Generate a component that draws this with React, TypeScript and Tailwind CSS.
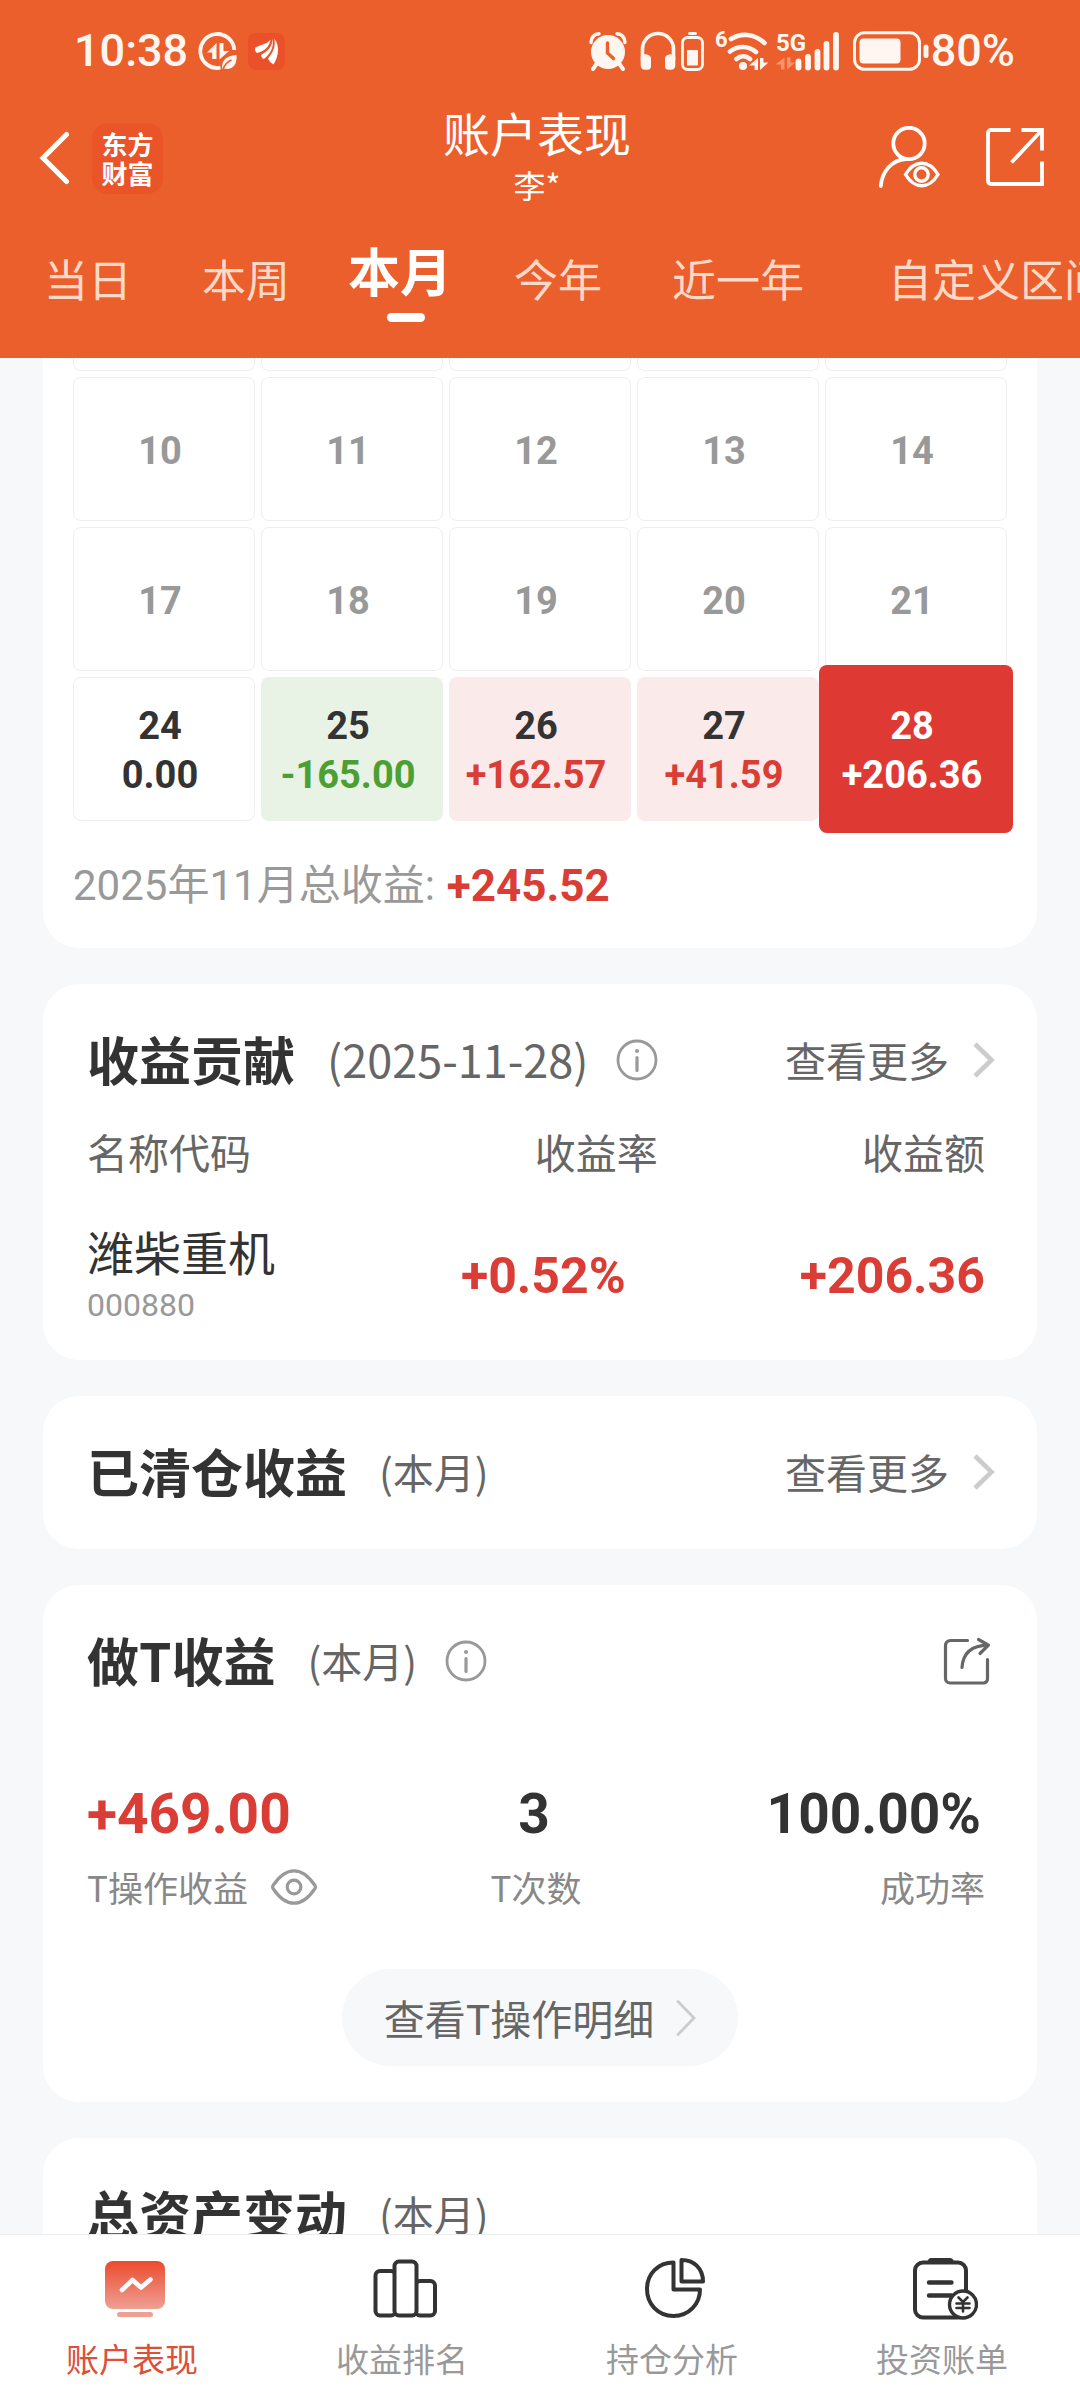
import type { ReactNode } from 'react'
import clsx from 'clsx'

const NUM = "font-['Roboto','Noto_Sans_CJK_SC',sans-serif]"

const periods = ['当日', '本周', '本月', '今年', '近一年', '自定义区间']

type Day = { day: number; amount?: string }

const days: Day[] = [
  { day: 10 }, { day: 11 }, { day: 12 }, { day: 13 }, { day: 14 },
  { day: 17 }, { day: 18 }, { day: 19 }, { day: 20 }, { day: 21 },
  { day: 24, amount: '0.00' },
  { day: 25, amount: '-165.00' },
  { day: 26, amount: '+162.57' },
  { day: 27, amount: '+41.59' },
  { day: 28, amount: '+206.36' },
]

const SELECTED = 28

/* ── Status bar ── */

function StatusBar() {
  return (
    <div className="flex items-center justify-between pt-5 pl-[74px] pr-[65px] text-[#fff6f1]">
      <div className="flex items-center">
        <span className={clsx(NUM, 'text-[45px] leading-[62px] font-medium')}>10:38</span>
        <svg className="ml-2.5" width="40" height="40" viewBox="0 0 40 40" fill="none" aria-hidden="true">
          <path d="M22.500 36.700A17 17 0 1 1 36.300 19" stroke="currentColor" strokeWidth="3.800" />
          <path d="M18.500 12v16h-4.300V21.500H9zM21.500 12h4v8h5.500L21.500 28.500z" fill="currentColor" />
          <path d="M24 38c-.5-8.500 4-13.500 14.500-14C39.500 34 34 39.500 26 37.500z" fill="currentColor" />
          <path d="M25 38c2-5 5-7.500 8.500-9" stroke="#eb5f2c" strokeWidth="1.600" />
        </svg>
        <span className="ml-2.5 flex size-[37px] items-center justify-center rounded-lg bg-[#ea5128]">
          <svg width="25" height="27" viewBox="0 0 25 27" fill="#fff" aria-hidden="true">
            <path d="M16.500 1.500C13.500 6 7.500 6.500 1.300 9.500c-.8 2.500 0 4.500 1.700 5.500C10 13.500 15.500 9 16.500 1.500z" />
            <path d="M18.300 .8C18.500 9 13.500 13 7 17c.3 2 1.200 3.500 2.800 4.100C16 16.500 20.500 9 18.300.8z" />
            <path d="M20.300 .8c1.700 9-2 14.500-6.300 19.700 1 2.500 3 4.700 5.500 6C24 20 26.500 8 20.300.8z" />
          </svg>
        </span>
      </div>

      <div className="flex items-center">
        <svg width="38" height="40" viewBox="0 0 38 40" fill="none" aria-hidden="true">
          <circle cx="19" cy="21" r="17" fill="currentColor" />
          <path d="M2 11.500C2.500 6 5.500 3 10 2.800M36 11.500C35.500 6 32.500 3 28 2.800" stroke="currentColor" strokeWidth="3.400" strokeLinecap="round" />
          <path d="M7.500 33L4 38M30.500 33L34 38" stroke="currentColor" strokeWidth="4" strokeLinecap="round" />
          <path d="M18.500 12V22l6 5.500" stroke="#eb5f2c" strokeWidth="3.400" strokeLinecap="round" />
        </svg>
        <svg className="ml-3" width="38" height="40" viewBox="0 0 38 40" fill="none" aria-hidden="true">
          <path d="M3.500 30V18a15.500 15.500 0 0 1 31 0v12" stroke="currentColor" strokeWidth="3.600" />
          <path d="M1.700 25.500c2.300-3 6-3 9.300-.5.700.5 1 1.200 1 2v8.500c0 2-1.500 3.300-3.500 3.300H6c-2.700 0-4.300-1.800-4.300-4.300zM36.300 25.500c-2.300-3-6-3-9.300-.5-.7.500-1 1.200-1 2v8.500c0 2 1.500 3.300 3.500 3.300H32c2.700 0 4.300-1.800 4.300-4.300z" fill="currentColor" />
        </svg>
        <svg className="ml-1" width="23" height="40" viewBox="0 0 23 40" fill="none" aria-hidden="true">
          <rect x="7" y="1" width="9" height="3" rx="1.500" fill="currentColor" />
          <rect x="1.500" y="6.500" width="20" height="32" rx="5" stroke="currentColor" strokeWidth="2.800" />
          <rect x="6" y="19" width="11" height="15.500" rx="1" fill="currentColor" />
        </svg>
        <svg className="ml-3 overflow-visible" width="52" height="40" viewBox="0 0 52 40" fill="none" aria-hidden="true">
          <text x="-1" y="16" fontFamily="Roboto" fontSize="22" fontWeight="700" fill="currentColor">6</text>
          <path d="M15 8C25 1.500 38 2.500 48.500 12M14 20.500c8-6 18-6 26 .5M20.500 28c4-3.500 9.500-3.500 13.500 0" stroke="currentColor" strokeWidth="4.600" strokeLinecap="round" />
          <circle cx="27" cy="35" r="4" fill="currentColor" />
          <path d="M42 27v12h-3.400v-4.500H33zM44 27h3.400v4.500h5L44 39z" fill="currentColor" />
        </svg>
        <svg className="ml-2 overflow-visible" width="63" height="40" viewBox="0 0 63 40" fill="none" aria-hidden="true">
          <text x="0" y="20" fontFamily="Roboto" fontSize="24" fontWeight="700" fill="currentColor">5G</text>
          <path d="M8.500 26.500v12H5v-5H-.5zM11 26.500h3.500v5H19.500L11 38.500z" fill="#f7936c" />
          <path d="M22.500 30.500v6M32 26v10.500M41.500 21v15.500M50.500 13v23.500M60 4v32.500" stroke="currentColor" strokeWidth="5.800" strokeLinecap="round" />
        </svg>
        <svg className="ml-3.5" width="76" height="40" viewBox="0 0 76 40" fill="none" aria-hidden="true">
          <rect x="1.500" y="1.800" width="65" height="36.500" rx="10" stroke="currentColor" strokeWidth="3" />
          <rect x="6.500" y="7.500" width="41" height="25" rx="4" fill="currentColor" />
          <rect x="70.500" y="13.500" width="5" height="13.500" rx="2.500" fill="currentColor" />
        </svg>
        <span className={clsx(NUM, 'ml-0.5 text-[45px] leading-[62px] font-medium')}>80%</span>
      </div>
    </div>
  )
}

/* ── Orange header: title row + period tabs ── */

function Header() {
  return (
    <header className="shrink-0 bg-[#eb5f2c] text-white">
      <StatusBar />

      <div className="mt-5 grid grid-cols-[1fr_auto_1fr] items-center pl-[38px] pr-9">
        <div className="flex items-center gap-[22px]">
          <button type="button" aria-label="返回">
            <svg width="32" height="54" viewBox="0 0 32 54" fill="none">
              <path d="M28.500 3.500L5 27l23.500 23.500" stroke="currentColor" strokeWidth="5" strokeLinecap="round" />
            </svg>
          </button>
          <div className="flex size-[71px] items-center justify-center rounded-2xl bg-[#ea5429] text-center text-[26px] leading-[29px] font-bold">
            东方<br />财富
          </div>
        </div>

        <div className="pr-2 pb-2 text-center">
          <h1 className="text-[47px] leading-[60px]">账户表现</h1>
          <p className="text-[32px] leading-[44px]">李*</p>
        </div>

        <div className="flex items-center justify-end gap-[46px]">
          <button type="button" aria-label="账户查看">
            <svg width="62" height="64" viewBox="0 0 62 64" fill="none" stroke="currentColor">
              <circle cx="31" cy="17.500" r="15.700" strokeWidth="3.800" />
              <path d="M2.800 60C4 45 14 34 28 33" strokeWidth="3.800" strokeLinecap="round" />
              <path d="M27.500 48.500c9-15 23.500-15 32.500 0-9 15-23.500 15-32.500 0z" strokeWidth="3.400" />
              <circle cx="43.500" cy="48.500" r="6.700" strokeWidth="3.400" />
            </svg>
          </button>
          <button type="button" aria-label="分享">
            <svg width="58" height="60" viewBox="0 0 58 60" fill="none" stroke="currentColor" strokeWidth="3.800">
              <path d="M24.500 2H5a3 3 0 0 0-3 3v48a3 3 0 0 0 3 3h51V33.500" />
              <path d="M35.500 2H56v20.500M55 3L25.500 34.500" />
            </svg>
          </button>
        </div>
      </div>

      <nav className="flex items-start gap-[70px] overflow-hidden pb-9 pl-11 whitespace-nowrap">
        {periods.map((p) =>
          p === '本月' ? (
            <button key={p} type="button" className="-ml-3 -mr-5 shrink-0 pt-6">
              <span className="block pr-3 text-[52px] leading-[64px] font-bold">{p}</span>
              <span className="mx-auto mt-[11px] block h-[9px] w-[38px] rounded-full bg-white" />
            </button>
          ) : (
            <button
              key={p}
              type="button"
              className="shrink-0 pt-8 text-[44px] leading-[64px] text-[#ffd9c8] last:pl-3.5"
            >
              {p}
            </button>
          ),
        )}
      </nav>
    </header>
  )
}

/* ── Shared pieces ── */

function Card({ className, children }: { className?: string; children: ReactNode }) {
  return <section className={clsx('rounded-[36px] bg-white px-11', className)}>{children}</section>
}

function CardTitle({ title, sub, wide, info, children }: {
  title: string
  sub: string
  wide?: boolean
  info?: boolean
  children?: ReactNode
}) {
  return (
    <div className="flex items-center pt-[43px] leading-[64px]">
      <h2 className="pb-0.5 text-[52px] font-bold text-[#333]">{title}</h2>
      <span className={clsx('ml-8 pb-0.5 text-[#666]', wide ? 'text-[45px]' : 'text-[41px]')}>{sub}</span>
      {info && (
        <button type="button" aria-label="说明" className="ml-7">
          <svg width="42" height="42" viewBox="0 0 42 42" fill="none">
            <circle cx="21" cy="21" r="19" stroke="#999" strokeWidth="2.800" />
            <circle cx="21" cy="12" r="2" fill="#999" />
            <path d="M21 18.500v13" stroke="#999" strokeWidth="3.200" strokeLinecap="round" />
          </svg>
        </button>
      )}
      <div className="-mr-0.5 ml-auto flex">{children}</div>
    </div>
  )
}

function MoreLink() {
  return (
    <a href="#more" className="flex items-center gap-6 text-[41px] text-[#666]">
      <span className="pb-0.5">查看更多</span>
      <svg width="22" height="36" viewBox="0 0 22 36" fill="none" aria-hidden="true">
        <path d="M2 2l16.500 16L2 34" stroke="#ccc" strokeWidth="4.600" />
      </svg>
    </a>
  )
}

/* ── Calendar ── */

function DayCell({ day, amount }: Day) {
  const selected = day === SELECTED
  const gain = amount?.startsWith('+')
  const loss = amount?.startsWith('-')

  return (
    <button
      type="button"
      className={clsx(
        'relative flex h-36 flex-col items-center justify-center rounded-lg pt-1 pr-2 text-[38px] leading-[49px] font-bold',
        !gain && !loss && 'border border-[#eee]',
        gain && !selected && 'bg-[#fbeaea]',
        loss && 'bg-[#e8f3e6]',
      )}
    >
      {selected && <span className="absolute -inset-x-1.5 -inset-y-3 rounded-lg bg-[#de3a33]" />}
      <span className={clsx('relative', selected ? 'text-white' : amount ? 'text-[#333]' : 'text-[#999]')}>
        {day}
      </span>
      {amount && (
        <span
          className={clsx(
            'relative',
            selected ? 'text-white' : gain ? 'text-[#d93d35]' : loss ? 'text-[#4b9f33]' : 'text-[#333]',
          )}
        >
          {amount}
        </span>
      )}
    </button>
  )
}

function CalendarCard() {
  return (
    <section className="rounded-b-[36px] bg-white px-[30px] pb-8">
      <div className={clsx(NUM, 'grid grid-cols-5 gap-1.5')}>
        {/* tail of the week that is scrolled under the header */}
        {[3, 4, 5, 6, 7].map((d) => (
          <div key={d} className="h-[13px] rounded-b-lg border border-t-0 border-[#eee]" />
        ))}
        {days.map((d) => (
          <DayCell key={d.day} {...d} />
        ))}
      </div>
      <p className="mt-[35px] flex items-center gap-3 text-[42px] leading-[60px] text-[#999]">
        <span className={NUM}>2025年11月总收益:</span>
        <strong className={clsx(NUM, 'text-[44px] font-bold text-[#d93d35]')}>+245.52</strong>
      </p>
    </section>
  )
}

/* ── Contribution table ── */

function ContributionCard() {
  return (
    <Card className="pb-[33px]">
      <CardTitle title="收益贡献" sub="(2025-11-28)" wide info>
        <MoreLink />
      </CardTitle>
      <div className="mt-7 pr-2">
        <table className="w-full table-fixed">
          <thead>
            <tr className="text-[41px] leading-[60px] text-[#666]">
              <th className="w-[30%] text-left font-normal">名称代码</th>
              <th className="w-[34%] pr-1 text-right font-normal">收益率</th>
              <th className="text-right font-normal">收益额</th>
            </tr>
          </thead>
          <tbody>
            <tr>
              <td className="pt-10">
                <div className="text-[47px] leading-[60px] text-[#333]">潍柴重机</div>
                <div className={clsx(NUM, 'pt-0.5 text-[32px] leading-[44px] text-[#999]')}>000880</div>
              </td>
              <td className={clsx(NUM, 'pt-11 pr-9 text-right text-[50px] font-bold text-[#d93d35]')}>+0.52%</td>
              <td className={clsx(NUM, 'pt-11 text-right text-[50px] font-bold text-[#d93d35]')}>+206.36</td>
            </tr>
          </tbody>
        </table>
      </div>
    </Card>
  )
}

/* ── T trading ── */

function TradingCard() {
  return (
    <Card className="pb-9">
      <CardTitle title="做T收益" sub="(本月)" info>
        <button type="button" aria-label="分享" className="mr-1">
          <svg width="48" height="48" viewBox="0 0 48 48" fill="none" stroke="#666" strokeWidth="3.200" strokeLinecap="round" strokeLinejoin="round">
            <path d="M24.500 3.500H7.500a5 5 0 0 0-5 5v33a4.500 4.500 0 0 0 4.500 4.500h33.500a4 4 0 0 0 4-4V22.500" />
            <path d="M19 30.500C20 16 28 8.500 45 8.200M35.500 2.500L45.500 8.200 37 16.500" />
          </svg>
        </button>
      </CardTitle>
      <dl className="mt-[87px] grid grid-cols-3 pr-2 text-[#333]">
        <div className="flex flex-col-reverse gap-3.5">
          <dt className="flex items-center gap-[22px] text-[35px] leading-[52px] text-[#888]">
            T操作收益
            <button type="button" aria-label="显示或隐藏">
              <svg width="48" height="38" viewBox="0 0 48 38" fill="none" stroke="#999" strokeWidth="3.200">
                <path d="M3 17.500C10 7 16.500 2.800 24 2.800S38 7 45 17.500q1 1.500 0 3C38 31 31.500 35.200 24 35.200S10 31 3 20.500q-1-1.500 0-3z" />
                <circle cx="24" cy="19" r="6.800" />
              </svg>
            </button>
          </dt>
          <dd className={clsx(NUM, 'text-[55px] leading-[66px] font-bold text-[#d93d35]')}>+469.00</dd>
        </div>
        <div className="flex flex-col-reverse gap-3.5 text-center">
          <dt className="text-[35px] leading-[52px] text-[#888]">T次数</dt>
          <dd className={clsx(NUM, 'pr-1 text-[55px] leading-[66px] font-bold')}>3</dd>
        </div>
        <div className="flex flex-col-reverse gap-3.5 text-right">
          <dt className="text-[35px] leading-[52px] text-[#888]">成功率</dt>
          <dd className={clsx(NUM, 'pr-1 text-[55px] leading-[66px] font-bold')}>100.00%</dd>
        </div>
      </dl>
      <button
        type="button"
        className="mx-auto mt-14 flex items-center gap-[22px] rounded-full bg-[#f7f8fa] px-[42px] py-[18px] text-[41px] leading-[61px] text-[#666]"
      >
        查看T操作明细
        <svg width="20" height="36" viewBox="0 0 20 36" fill="none" aria-hidden="true">
          <path d="M2 1.500L18 18 2 34.500" stroke="#ccc" strokeWidth="2.800" strokeLinecap="round" />
        </svg>
      </button>
    </Card>
  )
}

/* ── Bottom tab bar ── */

const tabs = [
  {
    label: '账户表现',
    icon: (
      <>
        <defs>
          <linearGradient id="tabGradient" x1="0" y1="0" x2="0" y2="1">
            <stop offset="0" stopColor="#ec4a2d" />
            <stop offset="1" stopColor="#eea094" />
          </linearGradient>
        </defs>
        <rect x="3" y="5" width="60" height="48" rx="8" fill="url(#tabGradient)" />
        <path d="M20 34l10.500-10 8.500 7.500 9.500-8" stroke="#fff" strokeWidth="4.600" strokeLinecap="round" strokeLinejoin="round" />
        <rect x="15" y="56" width="36" height="5" rx="2.500" fill="#eea094" />
      </>
    ),
  },
  {
    label: '收益排名',
    icon: (
      <g stroke="#333" strokeWidth="4">
        <rect x="3.500" y="15" width="20" height="44.500" rx="4.500" />
        <rect x="43.500" y="25" width="19.500" height="34.500" rx="4.500" />
        <rect x="22.500" y="5.500" width="22" height="54" rx="4.500" fill="#fff" />
      </g>
    ),
  },
  {
    label: '持仓分析',
    icon: (
      <g stroke="#333" strokeWidth="4" strokeLinejoin="round">
        <path d="M31.500 6.500C16 6.500 5 18 5 33s11 27 26.500 27S58 48 58 33.500H31.500z" />
        <path d="M39.500 4C52 4 61 12.500 61 25.500H39.500z" />
      </g>
    ),
  },
  {
    label: '投资账单',
    icon: (
      <g stroke="#333" strokeWidth="4" strokeLinecap="round">
        <path d="M19 2h19c2 0 3.500 1.500 4 4H15.500C16 3.500 17 2 19 2z" fill="#333" stroke="none" />
        <rect x="3" y="6.500" width="51" height="55" rx="8" />
        <path d="M17 26.500h22.500M17 39.500h22.500" strokeWidth="4.400" />
        <circle cx="51" cy="48.500" r="13.500" fill="#fff" strokeWidth="3.400" />
        <path d="M46.500 41.500L51 46l4.500-4.500M51 46v9.500M44.500 47.500h13M44.500 52h13" strokeWidth="2.600" />
      </g>
    ),
  },
]

function TabBar() {
  return (
    <nav className="grid shrink-0 grid-cols-4 border-t border-[#ececec] bg-white pt-[21px] pb-[18px]">
      {tabs.map((tab, i) => (
        <a key={tab.label} href="#tab" className="flex flex-col items-center gap-3.5">
          <svg width="66" height="64" viewBox="0 0 66 64" fill="none" aria-hidden="true">
            {tab.icon}
          </svg>
          <span className={clsx('pr-1.5 text-[33px] leading-[48px]', i === 0 ? 'text-[#dc4f38]' : 'text-[#999]')}>
            {tab.label}
          </span>
        </a>
      ))}
    </nav>
  )
}

export default function App() {
  return (
    <div lang="zh-CN" className="flex h-screen flex-col bg-[#f7f8fa] font-['Noto_Sans_CJK_SC',sans-serif]">
      <Header />
      <main className="min-h-0 flex-1 space-y-9 overflow-hidden px-[43px]">
        <CalendarCard />
        <ContributionCard />
        <Card className="pb-11">
          <CardTitle title="已清仓收益" sub="(本月)">
            <MoreLink />
          </CardTitle>
        </Card>
        <TradingCard />
        <Card className="pb-11">
          <CardTitle title="总资产变动" sub="(本月)" />
        </Card>
      </main>
      <TabBar />
    </div>
  )
}
